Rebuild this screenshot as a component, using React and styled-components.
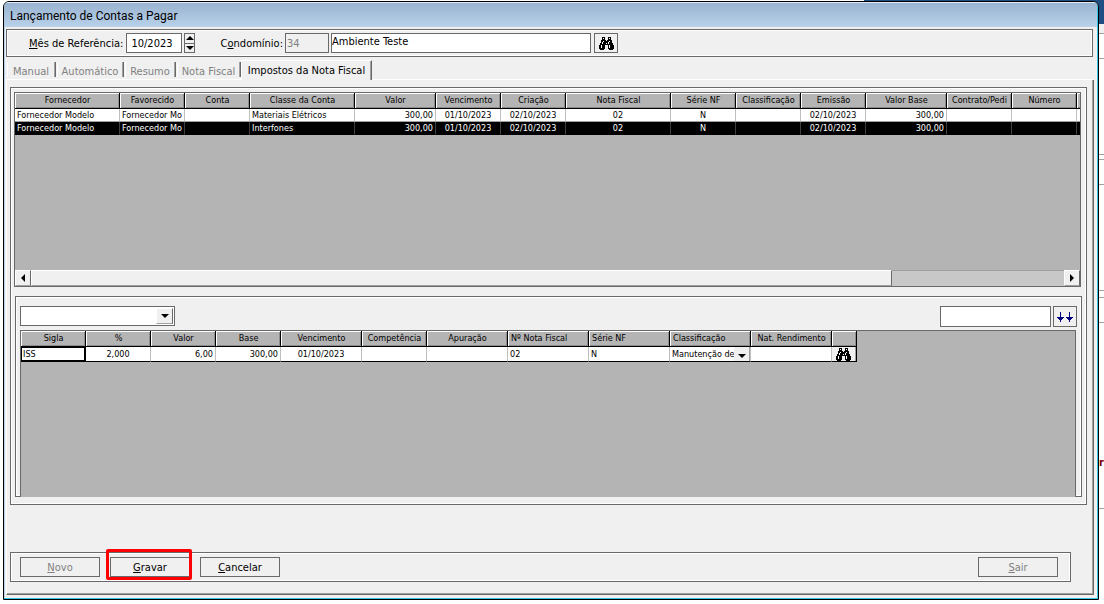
import React from 'react';
import styled, { createGlobalStyle, css } from 'styled-components';

const launches = {
  columns: [
    { title: 'Fornecedor', width: 105 },
    { title: 'Favorecido', width: 65 },
    { title: 'Conta', width: 65 },
    { title: 'Classe da Conta', width: 105 },
    { title: 'Valor', width: 81, align: 'right' },
    { title: 'Vencimento', width: 65, align: 'center' },
    { title: 'Criação', width: 65, align: 'center' },
    { title: 'Nota Fiscal', width: 105, align: 'center' },
    { title: 'Série NF', width: 65, align: 'center' },
    { title: 'Classificação', width: 65 },
    { title: 'Emissão', width: 65, align: 'center' },
    { title: 'Valor Base', width: 81, align: 'right' },
    { title: 'Contrato/Pedi', width: 65 },
    { title: 'Número', width: 65 },
    { title: '', width: 65 },
  ],
  rows: [
    ['Fornecedor Modelo', 'Fornecedor Mo', '', 'Materiais Elétricos', '300,00', '01/10/2023', '02/10/2023', '02', 'N', '', '02/10/2023', '300,00', '', '', ''],
    ['Fornecedor Modelo', 'Fornecedor Mo', '', 'Interfones', '300,00', '01/10/2023', '02/10/2023', '02', 'N', '', '02/10/2023', '300,00', '', '', ''],
  ],
};

const taxColumns = [
  { title: 'Sigla', width: 65 },
  { title: '%', width: 65 },
  { title: 'Valor', width: 65 },
  { title: 'Base', width: 65 },
  { title: 'Vencimento', width: 81 },
  { title: 'Competência', width: 65 },
  { title: 'Apuração', width: 81 },
  { title: 'Nº Nota Fiscal', width: 81, align: 'left' },
  { title: 'Série NF', width: 81, align: 'left' },
  { title: 'Classificação', width: 81, align: 'left' },
  { title: 'Nat. Rendimento', width: 81 },
  { title: '', width: 25 },
];

const tabs = [
  { title: 'Manual', width: 50 },
  { title: 'Automático', width: 68 },
  { title: 'Resumo', width: 52 },
  { title: 'Nota Fiscal', width: 65 },
  { title: 'Impostos da Nota Fiscal', width: 131, active: true },
];

function Binoculars() {
  return (
    <svg width="15" height="13" viewBox="0 0 15 13" shapeRendering="crispEdges" aria-hidden="true">
      <path d="M3 0h3v3h1v1h1V3h1V0h3v3h1v3h1v2h1v4h-1v1h-4v-1H9V8H6v4H5v1H1v-1H0V8h1V6h1V3h1z" fill="#000" />
      <path d="M4 1h1v1H4zM10 1h1v1h-1zM4 4h1v1H4zM3 5h1v2H3zM10 4h1v1h-1zM9 5h1v2H9zM2 8h1v3H2zM10 8h1v3h-1zM7 6h1v1H7z" fill="#fff" />
    </svg>
  );
}

function DownArrows() {
  return (
    <svg width="16" height="12" viewBox="0 0 16 12" shapeRendering="crispEdges" aria-hidden="true">
      <path d="M3 1h1v5h3v1H6v1H5v1H4v2H3V9H2V8H1V7H0V6h3zM12 1h1v5h3v1h-1v1h-1v1h-1v2h-1V9h-1V8h-1V7H9V6h3z" fill="#000080" />
    </svg>
  );
}

function Columns({ columns }) {
  return (
    <colgroup>
      {columns.map((c, i) => <col key={i} style={{ width: c.width }} />)}
    </colgroup>
  );
}

function LaunchGrid() {
  return (
    <Table>
      <Columns columns={launches.columns} />
      <thead>
        <tr>
          {launches.columns.map((c, i) => <Th key={i}>{c.title}</Th>)}
        </tr>
      </thead>
      <tbody>
        {launches.rows.map((row, r) => (
          <tr key={r}>
            {row.map((cell, i) => (
              <Td key={i} $align={launches.columns[i].align} $selected={r === 1}>{cell}</Td>
            ))}
          </tr>
        ))}
      </tbody>
    </Table>
  );
}

function TaxGrid() {
  return (
    <Table>
      <Columns columns={taxColumns} />
      <thead>
        <tr>
          {taxColumns.map((c, i) => <Th key={i} $align={c.align}>{c.title}</Th>)}
        </tr>
      </thead>
      <tbody>
        <tr>
          <TaxTd $focused>ISS</TaxTd>
          <TaxTd $align="center">2,000</TaxTd>
          <TaxTd $align="right">6,00</TaxTd>
          <TaxTd $align="right">300,00</TaxTd>
          <TaxTd $align="center">01/10/2023</TaxTd>
          <TaxTd />
          <TaxTd />
          <TaxTd>02</TaxTd>
          <TaxTd>N</TaxTd>
          <TaxTd $flush>
            <CellRow>
              <CellText>Manutenção de</CellText>
              <CellButton type="button" aria-label="Escolher classificação"><Arrow $dir="down" /></CellButton>
            </CellRow>
          </TaxTd>
          <TaxTd />
          <TaxTd $flush $last>
            <CellRow>
              <CellButton type="button" $wide aria-label="Procurar rendimento"><Binoculars /></CellButton>
            </CellRow>
          </TaxTd>
        </tr>
      </tbody>
    </Table>
  );
}

function App() {
  return (
    <Desktop>
      <GlobalStyle />
      <Behind aria-hidden="true">
        <BehindBar />
        <BehindStrip>
          <BehindBox $h={10} $grey />
          <BehindBox $h={25} />
          <BehindBox $h={96} />
          <BehindBox $h={5} />
          <BehindBox $h={25} />
          <BehindBox $h={106} />
          <BehindBox $h={7} />
          <BehindBox $h={25} />
          <BehindBox $h={186}><BehindText>or</BehindText></BehindBox>
        </BehindStrip>
      </Behind>
      <Window>
        <TitleBar>Lançamento de Contas a Pagar</TitleBar>
        <Content>
          <Header>
            <Label htmlFor="mes"><u>M</u>ês de Referência:</Label>
            <MonthInput id="mes" defaultValue="10/2023" />
            <Spinner>
              <SpinButton type="button" aria-label="Próximo mês"><Arrow $dir="up" /></SpinButton>
              <SpinButton type="button" aria-label="Mês anterior"><Arrow $dir="down" /></SpinButton>
            </Spinner>
            <Label htmlFor="condominio" $spaced>C<u>o</u>ndomínio:</Label>
            <CodeInput id="condominio" defaultValue="34" disabled />
            <NameInput aria-label="Nome do condomínio" defaultValue="Ambiente Teste" />
            <IconButton type="button" aria-label="Procurar condomínio"><Binoculars /></IconButton>
          </Header>

          <Tabs role="tablist">
            {tabs.map(t => (
              <Tab key={t.title} type="button" role="tab" aria-selected={!!t.active} $active={t.active} $width={t.width}>
                {t.title}
              </Tab>
            ))}
            <TabsRest />
          </Tabs>

          <Page>
            <Panel>
              <GridView $height={195}>
                <GridArea><LaunchGrid /></GridArea>
                <ScrollBar>
                  <ScrollButton type="button" aria-label="Rolar para a esquerda"><Arrow $dir="left" /></ScrollButton>
                  <Thumb />
                  <Track />
                  <ScrollButton type="button" aria-label="Rolar para a direita"><Arrow $dir="right" /></ScrollButton>
                </ScrollBar>
              </GridView>

              <TaxPanel>
                <TaxBar>
                  <Combo>
                    <select aria-label="Imposto"><option value="" /></select>
                    <ComboArrow aria-hidden="true"><Arrow $dir="down" /></ComboArrow>
                  </Combo>
                  <TaxTools>
                    <FilterInput aria-label="Valor para preencher" />
                    <IconButton type="button" $tall aria-label="Preencher abaixo"><DownArrows /></IconButton>
                  </TaxTools>
                </TaxBar>
                <TaxView $height={167}>
                  <GridArea><TaxGrid /></GridArea>
                </TaxView>
              </TaxPanel>
            </Panel>

            <Footer>
              <Button type="button" disabled><u>N</u>ovo</Button>
              <Highlight>
                <Button type="button"><u>G</u>ravar</Button>
              </Highlight>
              <Button type="button"><u>C</u>ancelar</Button>
              <Push />
              <Button type="button" disabled><u>S</u>air</Button>
            </Footer>
          </Page>
        </Content>
      </Window>
    </Desktop>
  );
}

export default App;

const GlobalStyle = createGlobalStyle`
  * {
    box-sizing: border-box;
  }
  body {
    margin: 0;
    background: #fff;
    color: #000;
    font-family: 'DejaVu Sans Condensed', 'Noto Sans', sans-serif;
    font-size: 11px;
  }
  button, input, select {
    margin: 0;
    padding: 0;
    border-radius: 0;
    color: inherit;
    font: inherit;
  }
`;

const Desktop = styled.div`
  position: relative;
  display: flex;
  min-height: 100vh;
  padding: 1px 5px 4px 3px;
`;

const Behind = styled.div`
  position: absolute;
  inset: 0;
  overflow: hidden;
  display: flex;
  flex-direction: column;
  align-items: flex-end;
`;

const BehindBar = styled.div`
  flex: none;
  width: 240px;
  height: 24px;
  background: #1e4e82;
`;

const BehindStrip = styled.div`
  width: 12px;
`;

const BehindBox = styled.div`
  display: flex;
  align-items: flex-end;
  justify-content: flex-end;
  height: ${p => p.$h}px;
  border-bottom: 1px solid #a0a0a0;
  background: ${p => (p.$grey ? '#f0f0f0' : '#fff')};
`;

const BehindText = styled.span`
  padding-bottom: 38px;
  color: #800000;
  font-weight: bold;
  line-height: 14px;
`;

const Window = styled.main`
  position: relative;
  flex: 1;
  min-width: 0;
  display: flex;
  flex-direction: column;
  border: 1px solid #000;
  border-radius: 6px 6px 0 0;
  background: #f0f0f0;
  box-shadow: inset -1px -1px 0 #35c5e8, inset 1px 0 0 #b9d1ea;
  overflow: hidden;
`;

const TitleBar = styled.h1`
  margin: 0 1px 0 0;
  padding: 0 6px;
  height: 25px;
  border-top: 1px solid #e4edf7;
  background: linear-gradient(#99b4d1, #b9d1ea);
  font-family: Roboto, 'Noto Sans', sans-serif;
  font-size: 12px;
  font-weight: normal;
  line-height: 26px;
`;

const Content = styled.div`
  flex: 1;
  display: flex;
  flex-direction: column;
  padding: 2px 4px 4px 2px;
`;

const group = css`
  border: 1px solid #696969;
  box-shadow: inset 1px 1px 0 #fff, inset -1px -1px 0 #fff;
`;

const Header = styled.div`
  ${group}
  display: flex;
  align-items: flex-start;
  height: 28px;
  margin-right: 1px;
  padding: 3px 0 0 22px;
`;

const Label = styled.label`
  padding-right: ${p => (p.$spaced ? 2 : 4)}px;
  line-height: 22px;
  width: ${p => (p.$spaced ? 68 : 97)}px;
  margin-left: ${p => (p.$spaced ? 22 : 0)}px;
  text-align: right;
  white-space: nowrap;
`;

const field = css`
  height: 20px;
  border: 1px solid #696969;
  background: #fff;
  outline: none;
`;

const MonthInput = styled.input`
  ${field}
  width: 56px;
  padding-right: 4px;
  text-align: center;
`;

const CodeInput = styled.input`
  ${field}
  width: 44px;
  padding: 0 1px;
  background: #f0f0f0;
  color: #808080;
`;

const NameInput = styled.input`
  ${field}
  width: 260px;
  margin: 0 3px 0 2px;
  padding-bottom: 3px;
`;

const Spinner = styled.div`
  display: flex;
  flex-direction: column;
  width: 11px;
  height: 20px;
  margin-left: 2px;
  border: 1px solid #696969;
`;

const SpinButton = styled.button`
  flex: 1;
  display: flex;
  align-items: center;
  justify-content: center;
  border: 0;
  background: #f0f0f0;
  & + & {
    border-top: 1px solid #696969;
  }
`;

const arrows = {
  up: css`border-width: 0 4px 4px; border-bottom-color: #000;`,
  down: css`border-width: 4px 4px 0; border-top-color: #000;`,
  left: css`border-width: 4px 4px 4px 0; border-right-color: #000;`,
  right: css`border-width: 4px 0 4px 4px; border-left-color: #000;`,
};

const Arrow = styled.span`
  flex: none;
  width: 0;
  height: 0;
  border: 0 solid transparent;
  ${p => arrows[p.$dir]}
`;

const IconButton = styled.button`
  display: flex;
  align-items: center;
  justify-content: center;
  width: 24px;
  height: ${p => (p.$tall ? 21 : 20)}px;
  border: 1px solid #696969;
  background: #f0f0f0;
`;

const Tabs = styled.div`
  display: flex;
  align-items: flex-end;
  height: 20px;
  margin-top: 3px;
  padding-right: 1px;
`;

const Tab = styled.button`
  width: ${p => p.$width}px;
  height: 18px;
  border: 0;
  border-bottom: 1px solid #fff;
  background: linear-gradient(#696969, #696969) top right / 1px 15px no-repeat,
    linear-gradient(#a0a0a0, #a0a0a0) top right 1px / 1px 15px no-repeat,
    linear-gradient(#fff, #fff) top left 1px / 1px 15px no-repeat,
    #f0f0f0;
  color: #808080;
  line-height: 19px;
  white-space: nowrap;
  ${p => p.$active && css`
    height: 20px;
    border: 0;
    border-top: 1px solid #fff;
    border-left: 1px solid #fff;
    border-right: 1px solid #696969;
    background: #f0f0f0;
    box-shadow: inset -1px 0 0 #a0a0a0;
    color: #000;
  `}
`;

const TabsRest = styled.div`
  flex: 1;
  height: 1px;
  background: #fff;
`;

const Page = styled.div`
  flex: 1;
  display: flex;
  flex-direction: column;
  padding: 7px 6px 12px 3px;
  border-left: 1px solid #fff;
  border-right: 1px solid #696969;
  border-bottom: 1px solid #696969;
  box-shadow: inset -1px -1px 0 #a0a0a0;
`;

const Panel = styled.section`
  ${group}
  padding: 4px 5px 7px 3px;
`;

const GridView = styled.div`
  display: flex;
  flex-direction: column;
  min-height: ${p => p.$height}px;
  border: 1px solid #696969;
  background: #b4b4b4;
`;

const GridArea = styled.div`
  flex: 1;
  overflow: hidden;
`;

const Table = styled.table`
  width: 1px;
  table-layout: fixed;
  border-collapse: separate;
  border-spacing: 0;
  font-size: 9px;
  line-height: 11px;
`;

const Th = styled.th`
  height: 16px;
  padding: 0 2px 0 3px;
  border-right: 1px solid #000;
  border-bottom: 1px solid #000;
  background: #b4b4b4;
  box-shadow: inset 1px 1px 0 #fff, inset -1px -1px 0 #8c8c8c;
  font-weight: normal;
  text-align: ${p => p.$align || 'center'};
  white-space: nowrap;
  overflow: hidden;
`;

const Td = styled.td`
  height: 13px;
  padding: 1px 2px 0;
  border-right: 1px solid #c0c0c0;
  border-bottom: 1px solid #a0a0a0;
  background: #fff;
  text-align: ${p => p.$align || 'left'};
  white-space: nowrap;
  overflow: hidden;
  ${p => p.$selected && css`
    border-right-color: #404040;
    border-bottom-color: #000;
    background: #000;
    color: #fff;
  `}
`;

const TaxTd = styled(Td)`
  height: 15px;
  border-bottom-color: #000;
  ${p => p.$flush && css`padding: 0;`}
  ${p => p.$last && css`border-right-color: #000;`}
  ${p => p.$focused && css`
    border-right-color: #000;
    box-shadow: inset 1px 1px 0 #000, inset -1px -1px 0 #000;
  `}
`;

const CellRow = styled.div`
  display: flex;
  height: 14px;
`;

const CellText = styled.span`
  flex: 1;
  padding: 2px 0 0 2px;
  overflow: hidden;
`;

const CellButton = styled.button`
  flex: none;
  display: flex;
  align-items: flex-end;
  justify-content: center;
  width: ${p => (p.$wide ? 24 : 16)}px;
  height: 14px;
  padding-bottom: ${p => (p.$wide ? 0 : 3)}px;
  border: 0;
  border-right: 1px solid #a0a0a0;
  background: #f0f0f0;
`;

const ScrollBar = styled.div`
  display: flex;
  height: 16px;
`;

const raised = css`
  border: 1px solid;
  border-color: #fff #696969 #a0a0a0 #fff;
  background: #f0f0f0;
`;

const ScrollButton = styled.button`
  ${raised}
  flex: none;
  display: flex;
  align-items: center;
  justify-content: center;
  width: 16px;
`;

const Thumb = styled.div`
  ${raised}
  flex: 5;
`;

const Track = styled.div`
  flex: 1;
  border-top: 1px solid #a0a0a0;
  background: #c8c8c8;
`;

const TaxPanel = styled.div`
  ${group}
  margin: 9px -1px 0 1px;
  padding: 9px 4px 0 4px;
`;

const TaxBar = styled.div`
  display: flex;
  justify-content: space-between;
  height: 24px;
`;

const Combo = styled.div`
  display: flex;
  width: 155px;
  height: 20px;
  padding: 1px;
  border: 1px solid #696969;
  background: #fff;
  select {
    flex: 1;
    min-width: 0;
    border: 0;
    background: #fff;
    appearance: none;
    outline: none;
  }
`;

const ComboArrow = styled.span`
  ${raised}
  display: flex;
  align-items: center;
  justify-content: center;
  width: 17px;
`;

const TaxTools = styled.div`
  display: flex;
  gap: 2px;
`;

const FilterInput = styled.input`
  ${field}
  width: 111px;
  height: 21px;
`;

const TaxView = styled(GridView)`
  margin: 0 1px -1px 0;
  border-bottom: 0;
`;

const Footer = styled.div`
  ${group}
  display: flex;
  gap: 10px;
  margin: auto 16px 0 0;
  padding: 4px 12px 4px 9px;
`;

const Button = styled.button`
  width: 80px;
  height: 20px;
  border: 1px solid #696969;
  background: #f0f0f0;
  &:disabled {
    color: #808080;
  }
`;

const Highlight = styled.div`
  position: relative;
  display: flex;
  &::after {
    content: '';
    position: absolute;
    inset: -8px -2px -3px -4px;
    border: 3px solid #f00;
    border-radius: 2px;
    pointer-events: none;
  }
`;

const Push = styled.div`
  flex: 1;
`;
